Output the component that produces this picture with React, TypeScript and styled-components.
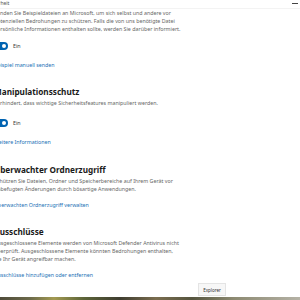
import styled, { createGlobalStyle } from 'styled-components'

const GlobalStyle = createGlobalStyle`
  html, body {
    margin: 0;
    padding: 0;
    background: #ffffff;
  }
  body {
    font-family: 'Noto Sans', 'DejaVu Sans', sans-serif;
  }
`

const Screen = styled.div`
  position: relative;
  width: 300px;
  height: 300px;
  overflow: hidden;
  display: flex;
  flex-direction: column;
`

const Window = styled.div`
  height: 297px;
  background: #ffffff;
  display: flex;
  flex-direction: column;
  overflow: hidden;
`

const TitleBar = styled.div`
  height: 9px;
  flex-shrink: 0;
  display: flex;
  justify-content: space-between;
  align-items: center;
  padding-right: 2px;
  border-bottom: 1px solid #f3f3f3;
  box-sizing: border-box;
`

const TitleText = styled.span`
  font-size: 5px;
  line-height: 6px;
  color: #555;
  margin-left: -14px;
  margin-top: -2px;
  white-space: nowrap;
`

const Minimize = styled.span`
  width: 6px;
  height: 1px;
  background: #444;
  margin-top: -2px;
`

const Content = styled.div`
  margin-left: -6px;
  display: flex;
  flex-direction: column;
`

const Section = styled.section<{ $gap?: number }>`
  display: flex;
  flex-direction: column;
  margin-top: ${(p) => p.$gap ?? 0}px;
`

const Heading = styled.h2`
  margin: 0;
  font-size: 8.2px;
  line-height: 10px;
  font-weight: 700;
  color: #1a1a1a;
  white-space: nowrap;
`

const Desc = styled.p<{ $top?: number }>`
  margin: ${(p) => p.$top ?? 2}px 0 0;
  font-size: 5.3px;
  line-height: 8px;
  color: #666;
  white-space: nowrap;
`

const Line = styled.span`
  display: block;
`

const ToggleRow = styled.div<{ $top: number }>`
  display: flex;
  align-items: center;
  gap: 5px;
  height: 10px;
  margin-top: ${(p) => p.$top}px;
`

const Toggle = styled.span`
  width: 14px;
  height: 8px;
  border-radius: 4px;
  background: #0063b1;
  display: flex;
  justify-content: flex-end;
  align-items: center;
  padding-right: 2px;
  box-sizing: border-box;
`

const Knob = styled.span`
  width: 4px;
  height: 4px;
  border-radius: 50%;
  background: #ffffff;
`

const ToggleLabel = styled.span`
  font-size: 5.3px;
  color: #333;
`

const Link = styled.a<{ $top: number }>`
  display: block;
  margin-top: ${(p) => p.$top}px;
  font-size: 5.3px;
  line-height: 8px;
  color: #1a6fb5;
  text-decoration: none;
  white-space: nowrap;
`

const Wallpaper = styled.div`
  height: 3px;
  background: linear-gradient(
    90deg,
    #4f4b3a 0%,
    #6c6a4a 10%,
    #a39a52 18%,
    #5c6438 28%,
    #3f3d30 40%,
    #7a6d4f 52%,
    #56553f 64%,
    #8d8a72 78%,
    #b5b2a6 100%
  );
`

const Tooltip = styled.div`
  position: absolute;
  left: 198px;
  top: 283px;
  width: 28px;
  height: 13px;
  box-sizing: border-box;
  background: #f7f7f7;
  border: 1px solid #e4e4e4;
  display: flex;
  align-items: center;
  justify-content: center;
  font-size: 4.5px;
  color: #333;
`

const App = () => {
  return (
    <>
      <GlobalStyle />
      <Screen>
        <Window>
          <TitleBar>
            <TitleText>Sicherheit</TitleText>
            <Minimize />
          </TitleBar>
          <Content>
            <Section>
              <Desc $top={0}>
                <Line>Senden Sie Beispieldateien an Microsoft, um sich selbst und andere vor</Line>
                <Line>potenziellen Bedrohungen zu schützen. Falls die von uns benötigte Datei</Line>
                <Line>persönliche Informationen enthalten sollte, werden Sie darüber informiert.</Line>
              </Desc>
              <ToggleRow $top={8}>
                <Toggle>
                  <Knob />
                </Toggle>
                <ToggleLabel>Ein</ToggleLabel>
              </ToggleRow>
              <Link $top={10}>Beispiel manuell senden</Link>
            </Section>

            <Section $gap={18}>
              <Heading>Manipulationsschutz</Heading>
              <Desc>
                <Line>Verhindert, dass wichtige Sicherheitsfeatures manipuliert werden.</Line>
              </Desc>
              <ToggleRow $top={11}>
                <Toggle>
                  <Knob />
                </Toggle>
                <ToggleLabel>Ein</ToggleLabel>
              </ToggleRow>
              <Link $top={10}>Weitere Informationen</Link>
            </Section>

            <Section $gap={19}>
              <Heading>Überwachter Ordnerzugriff</Heading>
              <Desc>
                <Line>Schützen Sie Dateien, Ordner und Speicherbereiche auf Ihrem Gerät vor</Line>
                <Line>unbefugten Änderungen durch bösartige Anwendungen.</Line>
              </Desc>
              <Link $top={8}>Überwachten Ordnerzugriff verwalten</Link>
            </Section>

            <Section $gap={18}>
              <Heading>Ausschlüsse</Heading>
              <Desc>
                <Line>Ausgeschlossene Elemente werden von Microsoft Defender Antivirus nicht</Line>
                <Line>überprüft. Ausgeschlossene Elemente könnten Bedrohungen enthalten,</Line>
                <Line>die Ihr Gerät angreifbar machen.</Line>
              </Desc>
              <Link $top={8}>Ausschlüsse hinzufügen oder entfernen</Link>
            </Section>
          </Content>
        </Window>
        <Wallpaper />
        <Tooltip>Explorer</Tooltip>
      </Screen>
    </>
  )
}

export default App
